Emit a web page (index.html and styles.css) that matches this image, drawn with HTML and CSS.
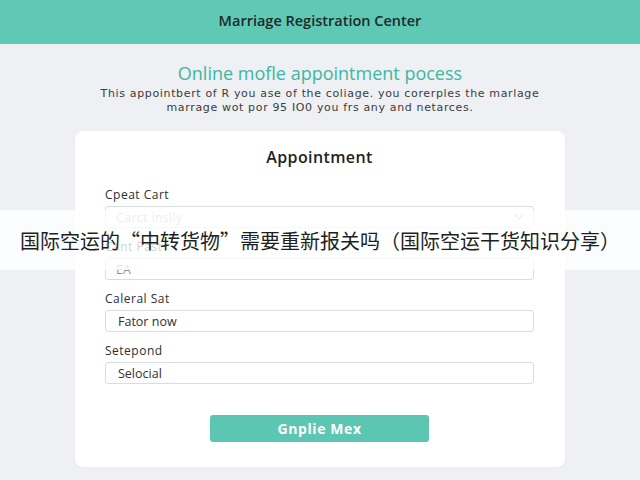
FILE: index.html
```html
<!DOCTYPE html>
<html lang="en">
<head>
<meta charset="utf-8">
<title>Marriage Registration Center</title>
<link rel="stylesheet" href="styles.css">
</head>
<body>
  <header class="topbar">
    <h1 class="topbar-title">Marriage Registration Center</h1>
  </header>

  <main class="page">
    <section class="intro">
      <h2 class="intro-title">Online mofle appointment pocess</h2>
      <p class="intro-text">This appointbert of R you ase of the coliage. you corerples the marlage<br>marrage wot por 95 IO0 you frs any and netarces.</p>
    </section>

    <form class="card">
      <h3 class="card-title">Appointment</h3>

      <div class="field">
        <label class="field-label">Cpeat Cart</label>
        <div class="select">
          <span class="placeholder">Carct inslly</span>
          <svg class="chevron" width="10" height="6" viewBox="0 0 10 6"><path d="M1 1l4 4 4-4" fill="none" stroke="#b5b9bd" stroke-width="1.4" stroke-linecap="round" stroke-linejoin="round"/></svg>
        </div>
      </div>

      <div class="field">
        <label class="field-label">Cant Past</label>
        <div class="input muted">EA</div>
      </div>

      <div class="field">
        <label class="field-label">Caleral Sat</label>
        <div class="input">Fator now</div>
      </div>

      <div class="field">
        <label class="field-label">Setepond</label>
        <div class="input">Selocial</div>
      </div>

      <div class="actions">
        <button type="button" class="btn">Gnplie Mex</button>
      </div>
    </form>
  </main>

  <div class="caption">国际空运的“中转货物”需要重新报关吗（国际空运干货知识分享）</div>
</body>
</html>
```

FILE: styles.css
```css
* {
  box-sizing: border-box;
}

body {
  margin: 0;
  background: #eef0f3;
  font-family: "Open Sans", "Liberation Sans", sans-serif;
  color: #2a2d30;
}

.topbar {
  height: 44px;
  background: #5fc9b6;
  display: flex;
  align-items: center;
  justify-content: center;
}

.topbar-title {
  margin: 0 0 4px;
  font-size: 14.5px;
  font-weight: 600;
  color: #1e2a28;
}

.page {
  display: flex;
  flex-direction: column;
  align-items: center;
}

.intro {
  margin-top: 19px;
  text-align: center;
}

.intro-title {
  margin: 0 0 4px;
  font-size: 18px;
  line-height: 20px;
  font-weight: 400;
  color: #3db7a2;
}

.intro-text {
  margin: 0;
  font-family: "DejaVu Sans", "Liberation Sans", sans-serif;
  font-size: 11px;
  line-height: 13.5px;
  letter-spacing: 0.65px;
  color: #3a3d40;
}

.card {
  margin-top: 17px;
  width: 490px;
  background: #ffffff;
  border-radius: 8px;
  padding: 16px 31px 25px 30px;
  box-shadow: 0 1px 3px rgba(0, 0, 0, 0.04);
}

.card-title {
  margin: 0 0 21px;
  text-align: center;
  font-size: 16px;
  line-height: 20px;
  letter-spacing: 0.4px;
  font-weight: 600;
  color: #1f2224;
}

.field {
  margin-bottom: 12px;
}

.field-label {
  display: block;
  font-size: 12px;
  line-height: 14px;
  letter-spacing: 0.5px;
  margin-bottom: 4px;
  color: #2c2f31;
}

.select,
.input {
  height: 22px;
  border: 1px solid #d9dde0;
  border-radius: 3px;
  background: #fff;
  display: flex;
  align-items: center;
  padding: 0 12px;
  font-size: 12.5px;
  color: #2f3234;
}

.select {
  justify-content: space-between;
  padding-left: 10px;
}

.placeholder {
  color: #a9adb0;
  letter-spacing: 0.3px;
}

.chevron {
  margin-right: -3px;
}

.input.muted {
  color: #8d9194;
  padding-left: 10px;
}

.actions {
  display: flex;
  justify-content: center;
  margin-top: 31px;
}

.btn {
  width: 219px;
  height: 27px;
  border: none;
  border-radius: 3px;
  background: #5cc6b3;
  color: #ffffff;
  font-family: "Open Sans", "Liberation Sans", sans-serif;
  font-size: 14px;
  letter-spacing: 0.6px;
  font-weight: 700;
}

.caption {
  position: absolute;
  left: 0;
  top: 210px;
  width: 100%;
  height: 60px;
  background: rgba(255, 255, 255, 0.78);
  display: flex;
  align-items: center;
  padding-left: 20px;
  font-family: "Noto Sans CJK SC", sans-serif;
  font-size: 20px;
  color: #1d1f21;
  white-space: nowrap;
}
```
